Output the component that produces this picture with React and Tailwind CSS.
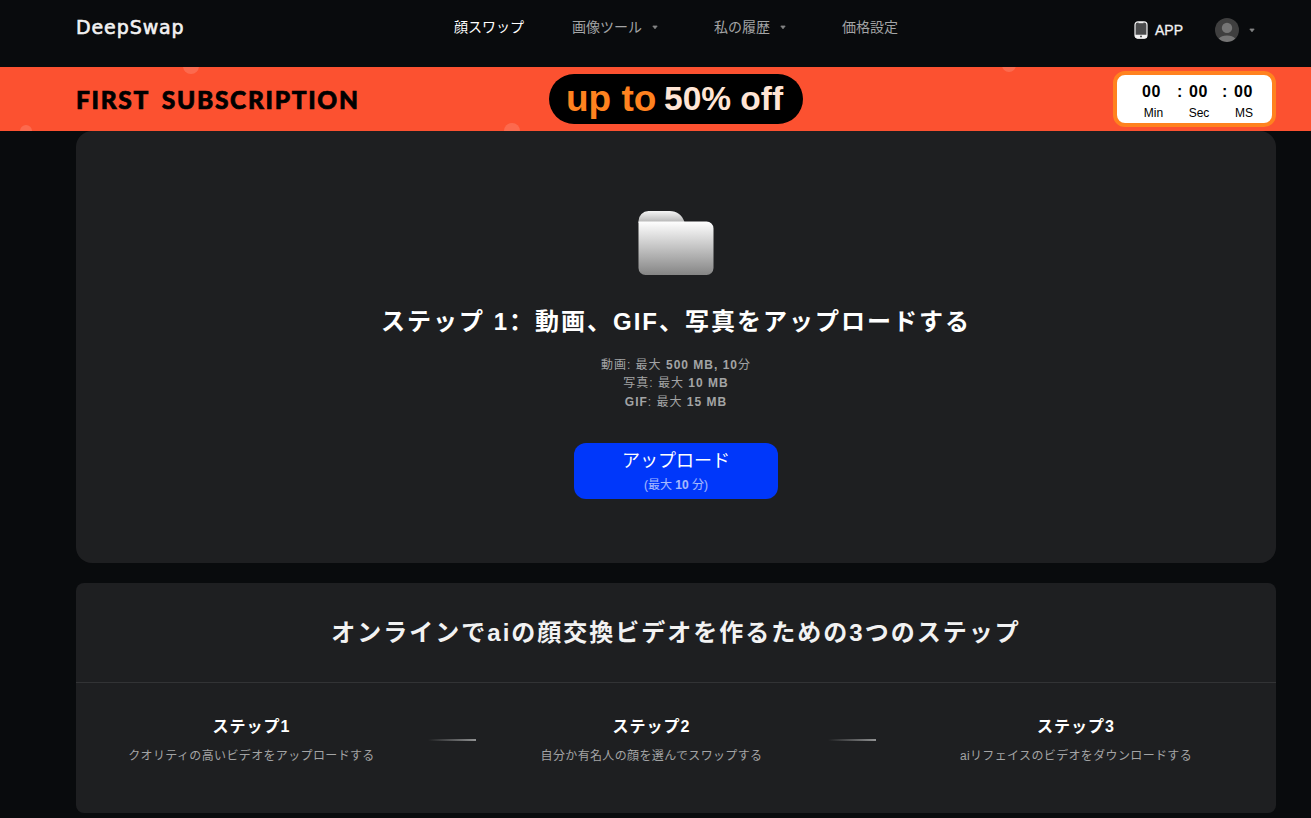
import React from 'react'

const navItems = [
  { label: '顔スワップ', active: true, box: 'w-[118px]' },
  { label: '画像ツール', arrow: true, box: 'w-[142px]' },
  { label: '私の履歴', arrow: true, box: 'w-[128px]' },
  { label: '価格設定', box: 'w-[60px]' },
]

const steps = [
  { title: 'ステップ1', text: 'クオリティの高いビデオをアップロードする', box: 'w-[351px] mr-px' },
  { title: 'ステップ2', text: '自分か有名人の顔を選んでスワップする', box: 'w-[351px] mr-px' },
  { title: 'ステップ3', text: 'aiリフェイスのビデオをダウンロードする', box: 'w-[400px]' },
]

const timer = [
  { value: '00', unit: 'Min', box: 'w-[47px]' },
  { value: '00', unit: 'Sec', box: 'w-[45px]' },
  { value: '00', unit: 'MS', box: 'w-[45px]' },
]

const Caret = () => (
  <svg width="6" height="5" viewBox="0 0 6 5" className="shrink-0">
    <path d="M0.8 1h4.4L3 3.8z" fill="#858687" stroke="#858687" strokeWidth="0.8" strokeLinejoin="round" />
  </svg>
)

const PhoneIcon = () => (
  <svg width="14" height="18" viewBox="0 0 14 18">
    <rect x="1" y="0.8" width="12" height="16.4" rx="3" fill="#4a4b4c" stroke="#f2f2f2" strokeWidth="1.2" />
    <path d="M4.5 1h5v1.2h-5z" fill="#f2f2f2" />
    <path d="M1 13.8h12V15a2.4 2.4 0 0 1-2.4 2.4H3.4A2.4 2.4 0 0 1 1 15z" fill="#f2f2f2" />
    <circle cx="7" cy="15.4" r="0.9" fill="#333" />
  </svg>
)

const Avatar = () => (
  <svg width="24" height="24" viewBox="0 0 24 24">
    <circle cx="12" cy="12" r="12" fill="#3f3f3f" />
    <circle cx="12" cy="9.9" r="5.2" fill="#757575" />
    <path d="M3.7 20.6a9.4 6 0 0 1 16.6 0A12 12 0 0 1 3.7 20.6z" fill="#757575" />
  </svg>
)

const FolderIcon = () => (
  <svg width="76" height="65" viewBox="0 0 76 65" className="shrink-0">
    <defs>
      <linearGradient id="back" x1="0" y1="0" x2="0" y2="1">
        <stop offset="0" stopColor="#f6f6f6" />
        <stop offset="1" stopColor="#b0b0b0" />
      </linearGradient>
      <linearGradient id="front" x1="0" y1="0" x2="0" y2="1">
        <stop offset="0" stopColor="#ffffff" />
        <stop offset="1" stopColor="#858585" />
      </linearGradient>
    </defs>
    <path d="M0.5 13V11a10 10 0 0 1 10-10h21c8 0 12.5 4 15 11v1z" fill="url(#back)" />
    <path d="M0.5 11.5h68a7 7 0 0 1 7 7V58a7 7 0 0 1-7 7h-61a7 7 0 0 1-7-7z" fill="url(#front)" />
  </svg>
)

const App = () => {
  return (
    <div className="h-[818px] overflow-hidden bg-[#090b0d] font-['Liberation_Sans','Noto_Sans_CJK_JP',sans-serif] text-white">
      {/* header section */}
      <header className="flex h-[67px] pl-[76px]">
        <div className="w-[378px] pt-[15px] font-['DejaVu_Sans',sans-serif] text-[19px] leading-[25px] tracking-[0.9px] text-[#f2f2f2] [-webkit-text-stroke:0.6px_#f2f2f2]">
          DeepSwap
        </div>
        <nav className="flex w-[680px] pt-[17px] text-[14px] leading-5">
          {navItems.map((item) => (
            <a key={item.label} className={`${item.box} flex h-5 items-center gap-[10px] whitespace-nowrap ${item.active ? 'text-white' : 'text-[#a3a4a5]'}`}>
              {item.label}
              {item.arrow && <Caret />}
            </a>
          ))}
        </nav>
        <div className="flex h-[60px] items-center">
          <PhoneIcon />
          <span className="ml-[7px] w-[60px] text-[14px] text-[#f2f2f2] [-webkit-text-stroke:0.3px_#f2f2f2]">APP</span>
          <Avatar />
          <span className="ml-[10px]"><Caret /></span>
        </div>
      </header>

      {/* promo banner section */}
      <div className="relative flex h-16 items-center overflow-hidden bg-[#fc5130] pl-[76px]">
        <span className="absolute -top-[9px] left-[183px] size-4 rounded-full bg-white/15"></span>
        <span className="absolute -top-[9px] left-[1002px] size-[14px] rounded-full bg-white/15"></span>
        <span className="absolute top-[56px] left-[504px] size-4 rounded-full bg-white/15"></span>
        <span className="absolute top-[58px] left-[20px] size-3 rounded-full bg-white/15"></span>
        <div className="w-[473px] pt-[2px] font-['Lato',sans-serif] text-[24.5px] font-black tracking-[1.7px] whitespace-nowrap text-black [-webkit-text-stroke:0.7px_#000] [word-spacing:5px]">
          FIRST SUBSCRIPTION
        </div>
        <div className="flex h-[50px] w-[254px] items-center rounded-full bg-black pl-[17px] font-bold whitespace-nowrap">
          <span className="w-[98px] text-[37px] leading-[50px] text-[#ff821f]">up to</span>
          <span className="text-[33.5px] leading-[50px] text-[#ffe5d5]">50% off</span>
        </div>
        <div className="ml-[310px] flex h-14 w-[163px] rounded-xl border-4 border-[#ff821f] bg-white pt-[7px] pl-[25px] text-black">
          {timer.map((t, i) => (
            <div key={t.unit} className={`${t.box} flex shrink-0`}>
              <div className="w-[20px]">
                <p className="text-[16px] leading-5 font-bold tracking-[0.5px]">{t.value}</p>
                <p className="flex justify-center text-[12px] leading-[22px]">
                  <span className={i === 0 ? 'pl-[3px]' : ''}>{t.unit}</span>
                </p>
              </div>
              {i < 2 && <span className={`${i === 0 ? 'pl-[15px]' : 'pl-[13px]'} text-[16px] leading-5 font-bold`}>:</span>}
            </div>
          ))}
        </div>
      </div>

      <main className="w-[1276px] pl-[76px]">
        {/* upload section */}
        <section className="flex h-[432px] flex-col items-center rounded-2xl bg-[#1e1f21] pt-[79px]">
          <FolderIcon />
          <h1 className="mt-[27px] h-[36px] text-[24px] leading-[36px] font-bold tracking-[2px] whitespace-nowrap">
            ステップ 1<span className="font-['Noto_Sans_CJK_SC',sans-serif]" lang="zh-CN">：</span>動画、GIF、写真をアップロードする
          </h1>
          <div className="mt-[18px] text-center text-[12px] leading-[18.4px] tracking-[1px] text-[#a3a4a5]">
            <p>動画: 最大 <b>500 MB, 10</b>分</p>
            <p>写真: 最大 <b>10 MB</b></p>
            <p><b>GIF</b>: 最大 <b>15 MB</b></p>
          </div>
          <button className="mt-[32px] flex h-14 w-[204px] flex-col items-center rounded-xl bg-[#0037fa] pt-[5px]">
            <span className="text-[18px] leading-[27px]">アップロード</span>
            <span className="text-[12px] leading-5 text-white/65">(最大 <b>10</b> 分)</span>
          </button>
        </section>

        {/* how it works section */}
        <section className="mt-5 h-[230px] rounded-lg bg-[#1e1f21]">
          <h2 className="h-[100px] border-b border-[#323335] text-center text-[24px] leading-[99px] font-bold tracking-[2px] text-[#f2f2f2]">
            オンラインでaiの顔交換ビデオを作るための3つのステップ
          </h2>
          <div className="flex">
            {steps.map((step, i) => (
              <React.Fragment key={step.title}>
                <div className={`${step.box} pt-[32px] text-center whitespace-nowrap`}>
                  <h3 className="text-[16px] leading-6 font-bold tracking-[1px]">{step.title}</h3>
                  <p className="mt-[7px] text-[12px] leading-5 tracking-[0.36px] text-[#a3a4a5]">{step.text}</p>
                </div>
                {i < 2 && <div className="mt-[56px] h-[2px] w-12 bg-linear-to-r from-transparent to-[#909192]"></div>}
              </React.Fragment>
            ))}
          </div>
        </section>
      </main>
    </div>
  )
}

export default App
